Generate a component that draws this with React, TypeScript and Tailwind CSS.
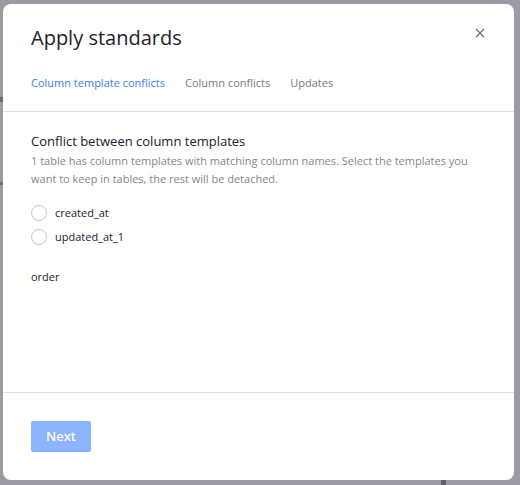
import { useState } from "react";

const TABS = ["Column template conflicts", "Column conflicts", "Updates"];
const OPTIONS = ["created_at", "updated_at_1"];

export default function App() {
  const [tab] = useState(0);
  const [picked, setPicked] = useState<string | null>(null);

  return (
    <div
      className="relative h-[485px] w-[520px] overflow-hidden bg-[#9b9ba3] pl-[3px] pt-[4px]"
      style={{ fontFamily: '"Open Sans", "Noto Sans", sans-serif' }}
    >
      {/* bits of the page behind the overlay */}
      <div className="absolute left-0 top-[97px] h-[5px] w-[3px] bg-[#6e6e78]" />
      <div className="absolute left-0 top-[182px] h-[3px] w-[3px] bg-[#6e6e78]" />
      <div className="absolute left-[441px] top-[480px] h-[5px] w-[5px] bg-[#5f5f69]" />

      <div className="flex h-[476px] w-[511px] flex-col rounded-[8px] bg-white">
        {/* Header */}
        <div className="relative px-[28px] pt-[20px]">
          <h1 className="text-[20px] leading-[28px] text-[#222228]">Apply standards</h1>
          <button className="absolute right-[26px] top-[21px] flex h-[16px] w-[16px] items-center justify-center text-[#6b6b75]">
            <svg width="10" height="10" viewBox="0 0 10 10" fill="none" stroke="currentColor" strokeWidth="1.1">
              <path d="M1 1l8 8M9 1l-8 8" />
            </svg>
          </button>
          <div className="mt-[24px] flex gap-[20px] pb-[21px]">
            {TABS.map((t, i) => (
              <span
                key={t}
                className={`text-[11px] leading-[14px] ${i === tab ? "text-[#3b7cf0]" : "text-[#77777f]"}`}
              >
                {t}
              </span>
            ))}
          </div>
        </div>
        <div className="h-px bg-[#e2e2e6]" />

        {/* Body */}
        <div className="flex-1 px-[28px] pt-[20px]">
          <h2 className="text-[13px] leading-[18px] text-[#222228]">Conflict between column templates</h2>
          <p className="mt-[2px] text-[11px] leading-[18px] text-[#86868e]">
            1 table has column templates with matching column names. Select the templates you want to keep in tables,
            the rest will be detached.
          </p>
          <div className="mt-[17px] flex flex-col gap-[8px]">
            {OPTIONS.map((o) => (
              <label key={o} className="flex cursor-pointer items-center gap-[8px]">
                <span
                  onClick={() => setPicked(o)}
                  className={`h-[16px] w-[16px] rounded-full border ${picked === o ? "border-[#3b7cf0] border-[5px]" : "border-[#c9c9cf]"}`}
                />
                <span className="text-[11px] leading-[16px] text-[#222228]">{o}</span>
              </label>
            ))}
          </div>
          <div className="mt-[24px] text-[11px] leading-[16px] text-[#222228]">order</div>
        </div>

        {/* Footer */}
        <div className="h-px bg-[#e2e2e6]" />
        <div className="px-[28px] py-[28px]">
          <button className="h-[31px] w-[60px] rounded-[2px] bg-[#8cb4ff] text-[13px] font-semibold text-white">
            Next
          </button>
        </div>
      </div>
    </div>
  );
}
